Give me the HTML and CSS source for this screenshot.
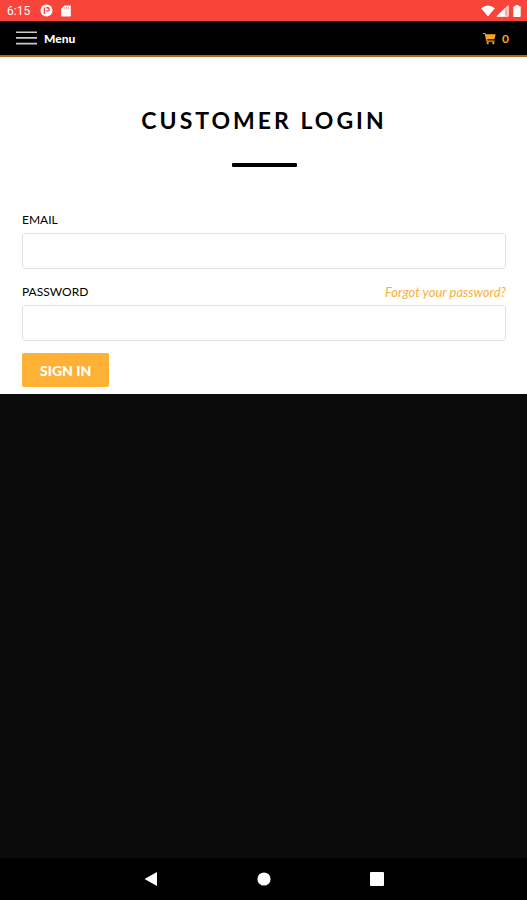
FILE: index.html
```html
<!DOCTYPE html>
<html lang="en">
<head>
<meta charset="utf-8">
<meta name="viewport" content="width=device-width, initial-scale=1">
<title>Customer Login</title>
<link rel="stylesheet" href="styles.css">
</head>
<body>
<div class="status">
  <div class="status-group">
    <span class="clock">6:15</span>
    <svg width="13" height="13" viewBox="0 0 13 13" aria-hidden="true"><circle cx="6.5" cy="6.5" r="6" fill="#fff"/><path d="M4.4 10V3.5M6.2 3.7h1.4a1.6 1.6 0 0 1 0 3.2H6.2" fill="none" stroke="#f94539" stroke-width="1.4"/></svg>
    <svg width="10" height="12" viewBox="0 0 10 12" aria-hidden="true"><path d="M3.4.5H9a.8.8 0 0 1 .8.8v9.4a.8.8 0 0 1-.8.8H1a.8.8 0 0 1-.8-.8V3.8z" fill="#fff"/><path d="M3.6 2v1.8M5.5 2v1.8M7.4 2v1.8" stroke="#f94539" stroke-width=".6"/></svg>
  </div>
  <div class="status-group status-right">
    <svg width="14" height="12" viewBox="0 0 14 12" aria-hidden="true"><path d="M.2 3.2Q7-2 13.8 3.2L7 11.5z" fill="#fff"/></svg>
    <svg width="13" height="12" viewBox="0 0 13 12" aria-hidden="true"><path d="M12.5 0v11.5H.5z" fill="#fff" opacity=".55"/><path d="M8.8 3.6v7.9H.5z" fill="#fff"/><path d="M12.2.8v10.4H1.2z" fill="none" stroke="#fff" stroke-width=".8"/></svg>
    <svg class="battery" width="8" height="12" viewBox="0 0 8 12" aria-hidden="true"><path d="M2.4 0h3.2v1.2h1.2q.9 0 .9.9v9q0 .9-.9.9H1.2q-.9 0-.9-.9v-9q0-.9.9-.9h1.2z" fill="#fff"/></svg>
  </div>
</div>
<header class="topbar">
  <button class="menu" type="button">
    <svg width="21" height="14" viewBox="0 0 21 14" aria-hidden="true"><path d="M0 1.2h21M0 6.9h21M0 12.6h21" stroke="#c9c9c9" stroke-width="1.6"/></svg>
    <span>Menu</span>
  </button>
  <a class="cart" href="#cart" aria-label="Cart, 0 items">
    <svg width="13" height="13" viewBox="0 0 13 13" aria-hidden="true"><path d="M0 .9h2.3l.5 1.4h9.9l-1.3 5H4.2l.3 1.2h7v1.2H3.5L1.7 2H0z" fill="#f9a41f"/><circle cx="4.7" cy="11.1" r="1.2" fill="#f9a41f"/><circle cx="10.3" cy="11.1" r="1.2" fill="#f9a41f"/></svg>
    <span>0</span>
  </a>
</header>
<main class="login">
  <h1>Customer Login</h1>
  <hr>
  <form>
    <div class="label-row"><label for="email">EMAIL</label></div>
    <input id="email" type="email">
    <div class="label-row"><label for="password">PASSWORD</label><a class="forgot" href="#recover">Forgot your password?</a></div>
    <input id="password" type="password">
    <button class="submit" type="submit">SIGN IN</button>
  </form>
</main>
<nav class="system">
  <button type="button" aria-label="Back"><svg width="14" height="16" viewBox="0 0 14 16"><path d="M13 1v14L.5 8z" fill="#fff"/></svg></button>
  <button type="button" aria-label="Home"><svg width="14" height="14" viewBox="0 0 14 14"><circle cx="7" cy="7" r="6.6" fill="#fff"/></svg></button>
  <button type="button" aria-label="Overview"><svg width="14" height="14" viewBox="0 0 14 14"><rect width="14" height="14" rx="1" fill="#fff"/></svg></button>
</nav>
</body>
</html>
```
FILE: styles.css
```css
* {
  box-sizing: border-box;
}

body {
  margin: 0;
  min-height: 100vh;
  display: flex;
  flex-direction: column;
  background: #0b0b0b;
  color: #000;
  font-family: Lato, sans-serif;
}

button {
  border: 0;
  padding: 0;
  background: none;
  font: inherit;
  cursor: pointer;
}

svg {
  display: block;
}

.status,
.status-group,
.topbar,
.menu,
.cart {
  display: flex;
  align-items: center;
}

.status {
  justify-content: space-between;
  height: 21px;
  padding: 0 6px 0 7px;
  background: #f94539;
  color: #fff;
}

.status-group {
  gap: 8px;
}

.status-right {
  gap: 1px;
}

.battery {
  margin-left: 3px;
}

.clock {
  padding-right: 2px;
  font: 12px/20px Roboto, sans-serif;
}

.topbar {
  justify-content: space-between;
  height: 36px;
  padding: 0 18px 0 16px;
  background: #000;
  border-bottom: 2px solid #a96c1c;
}

.menu {
  gap: 7px;
  color: #fff;
  font-size: 12px;
  font-weight: 900;
}

.cart {
  gap: 6px;
  color: #f9a41f;
  font-size: 12px;
  font-weight: 700;
  text-decoration: none;
}

.login {
  padding: 48px 21px 7px 22px;
  background: #fff;
}

h1 {
  margin: 0;
  font-size: 23px;
  font-weight: 700;
  line-height: 30px;
  letter-spacing: 3px;
  text-align: center;
  text-transform: uppercase;
}

hr {
  width: 65px;
  height: 4px;
  margin: 28px auto 42px;
  border: 0;
  border-radius: 1px;
  background: #000;
}

.label-row {
  display: flex;
  justify-content: space-between;
  height: 24px;
  font-size: 12px;
  line-height: 22px;
}

.forgot {
  color: #fbae3c;
  font-size: 13px;
  font-style: italic;
  text-decoration: none;
}

input {
  display: block;
  width: 100%;
  height: 36px;
  margin: 0 0 12px;
  padding: 0 10px;
  border: 1px solid #e2e2e2;
  border-radius: 3px;
  background: #fff;
  font: inherit;
}

.submit {
  display: block;
  height: 34px;
  padding: 0 18px;
  border-radius: 2px;
  background: #ffb136;
  color: #fff;
  font-size: 14px;
  font-weight: 900;
}

.system {
  display: flex;
  justify-content: center;
  gap: 99px;
  height: 42px;
  margin-top: auto;
  background: #000;
}
```
